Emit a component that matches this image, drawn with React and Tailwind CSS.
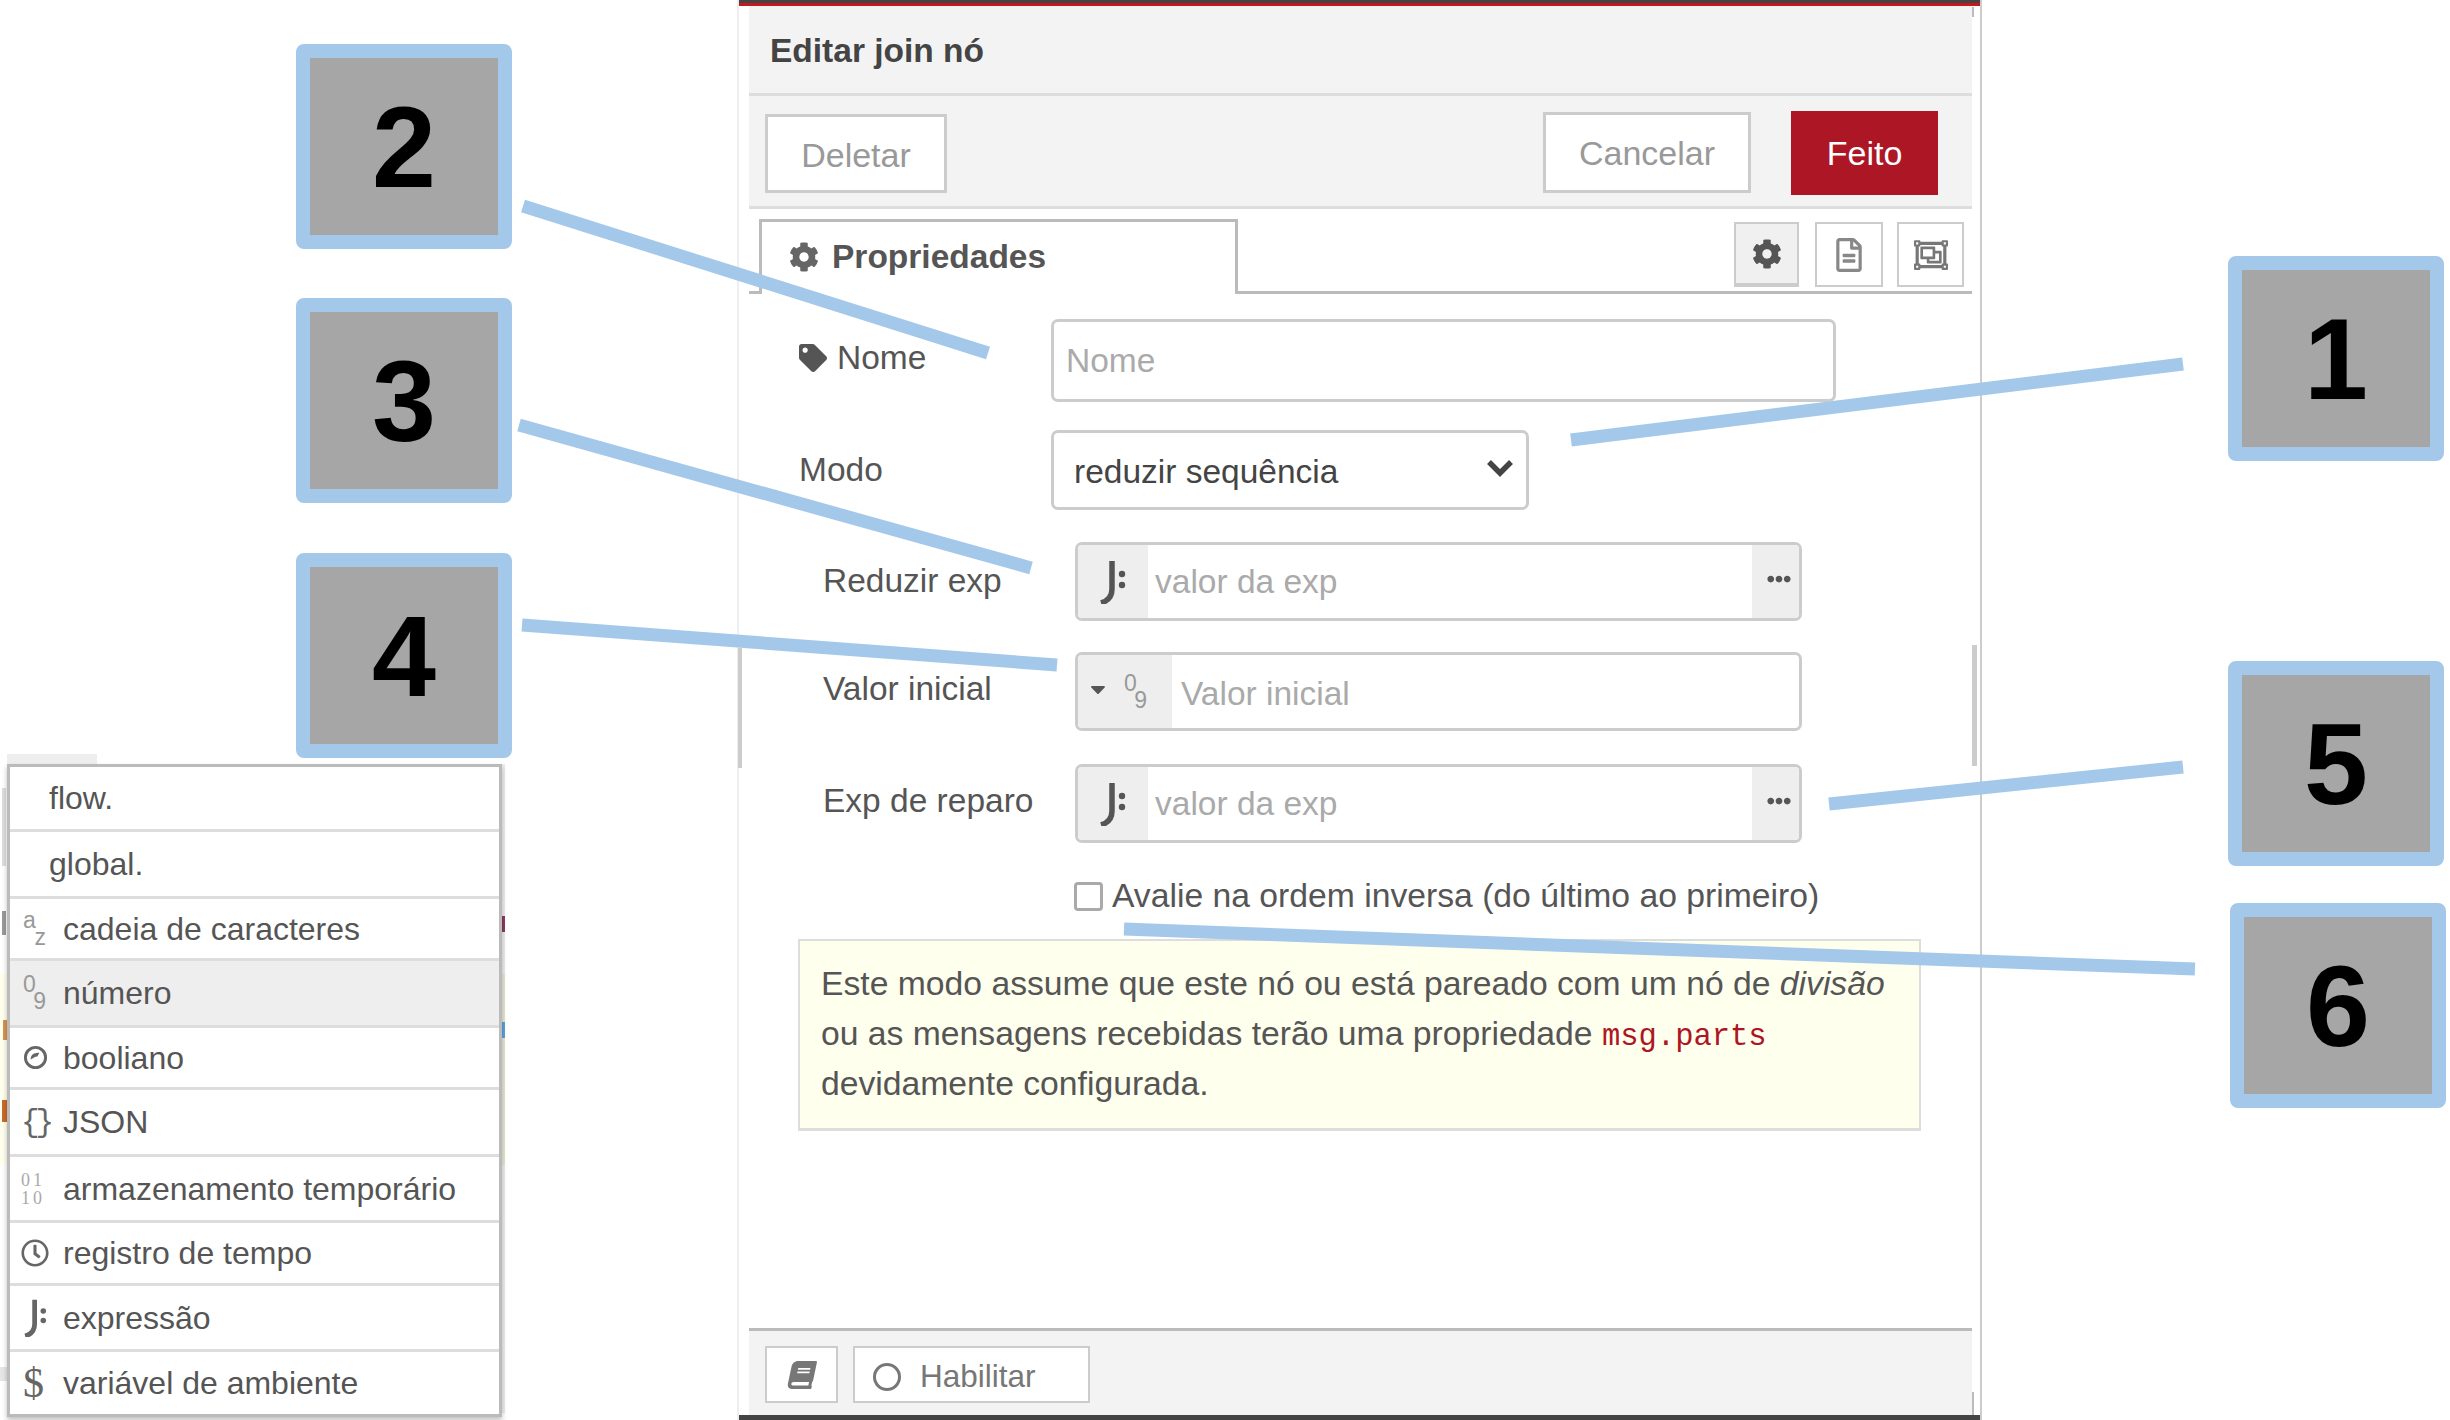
import { FaBook, FaCaretDown, FaCog, FaEllipsisH, FaRegClock, FaRegFileAlt, FaRegObjectGroup, FaTag } from 'react-icons/fa'

const badges = [
  { n: '2', cls: 'left-[296px] top-[44px]' },
  { n: '3', cls: 'left-[296px] top-[298px]' },
  { n: '4', cls: 'left-[296px] top-[553px]' },
  { n: '1', cls: 'left-[2228px] top-[256px]' },
  { n: '5', cls: 'left-[2228px] top-[661px]' },
  { n: '6', cls: 'left-[2230px] top-[903px]' },
]

const leaders = [
  [523, 206, 988, 353],
  [519, 425, 1031, 568],
  [522, 625, 1057, 665],
  [1571, 440, 2183, 364],
  [1829, 804, 2183, 767],
  [1124, 929, 2195, 969],
]

function JsonataIcon({ className }) {
  return (
    <svg viewBox="0 0 28 44" className={className} fill="none">
      <path d="M13 1V29C13 37 9 41 2 43" stroke="currentColor" strokeWidth="5.5" />
      <circle cx="23" cy="14" r="3.2" fill="currentColor" />
      <circle cx="23" cy="25" r="3.2" fill="currentColor" />
    </svg>
  )
}

function BoolIcon() {
  return (
    <svg viewBox="0 0 26 26" className="w-[25px] h-[25px] text-[#666]" fill="none">
      <circle cx="13" cy="13" r="10.5" stroke="currentColor" strokeWidth="3" />
      <path d="M8 15C8 10 11 8 17 8L15 12C12 12 11 14 8 15Z" fill="currentColor" />
    </svg>
  )
}

function StackedIcon({ top, bottom }) {
  return (
    <span className="flex flex-col w-[23px] text-[23px] leading-[17px] text-[#999]">
      <span className="self-start">{top}</span>
      <span className="self-end">{bottom}</span>
    </span>
  )
}

const menuRows = [
  { label: 'flow.', h: 'h-[62px]' },
  { label: 'global.', h: 'h-[67px]' },
  { label: 'cadeia de caracteres', h: 'h-[62px]', icon: <StackedIcon top="a" bottom="z" /> },
  { label: 'número', h: 'h-[67px]', icon: <StackedIcon top="0" bottom="9" />, active: true },
  { label: 'booliano', h: 'h-[62px]', icon: <BoolIcon /> },
  { label: 'JSON', h: 'h-[67px]', icon: <span className="-ml-[2px] text-[31px] leading-none text-[#666] font-['Liberation_Mono',monospace] tracking-[-4px]">{'{}'}</span> },
  {
    label: 'armazenamento temporário',
    h: 'h-[66px]',
    icon: (
      <span className="flex flex-col -ml-[2px] text-[18px] leading-[18px] text-[#aaa] font-['Liberation_Serif',serif] tracking-[3px]">
        <span>01</span>
        <span>10</span>
      </span>
    ),
  },
  { label: 'registro de tempo', h: 'h-[63px]', icon: <FaRegClock className="-ml-[2px] w-[28px] h-[28px] text-[#666]" /> },
  { label: 'expressão', h: 'h-[66px]', icon: <JsonataIcon className="w-[25px] h-[38px] text-[#666]" /> },
  { label: 'variável de ambiente', h: 'h-[65px]', icon: <span className="text-[42px] leading-none text-[#666] font-['Liberation_Serif',serif]">$</span> },
]

function TypeMenu() {
  return (
    <div className="absolute left-[7px] top-[764px] w-[495px] border-[3px] border-[#bbb] bg-white shadow-[0_3px_5px_rgba(0,0,0,0.25)]">
      {menuRows.map((row, index) => (
        <div
          key={row.label}
          className={`${row.h} flex items-center text-[32px] text-[#555] ${index > 0 ? 'border-t-[3px] border-[#ddd]' : ''} ${row.active ? 'bg-[#eee]' : ''}`}
        >
          {row.icon ? (
            <>
              <span className="w-[53px] pl-[13px] flex items-center justify-start shrink-0">{row.icon}</span>
              <span>{row.label}</span>
            </>
          ) : (
            <span className="pl-[39px]">{row.label}</span>
          )}
        </div>
      ))}
    </div>
  )
}

// slivers of the editor canvas that show behind the menu
function MenuBackdrop() {
  return (
    <>
      <div className="absolute left-[7px] top-[754px] w-[90px] h-[10px] bg-[#eee]" />
      <div className="absolute left-[2px] top-[788px] w-[4px] h-[78px] bg-[#ddd]" />
      <div className="absolute left-[2px] top-[911px] w-[4px] h-[24px] bg-[#999]" />
      <div className="absolute left-0 top-[974px] w-[7px] h-[191px] bg-[#ffffee]" />
      <div className="absolute left-[3px] top-[1020px] w-[4px] h-[20px] bg-[#d9924f]" />
      <div className="absolute left-[2px] top-[1100px] w-[5px] h-[22px] bg-[#c96a2c]" />
      <div className="absolute left-0 top-[1367px] w-[7px] h-[14px] bg-[#e6e6e6]" />
      <div className="absolute left-[501px] top-[764px] w-[4px] h-[649px] bg-[#ececec]" />
      <div className="absolute left-[502px] top-[916px] w-[3px] h-[16px] bg-[#8a3a5c]" />
      <div className="absolute left-[502px] top-[974px] w-[3px] h-[191px] bg-[#e6e6cf]" />
      <div className="absolute left-[502px] top-[1022px] w-[3px] h-[16px] bg-[#5aa3d8]" />
    </>
  )
}

function Row({ sub, label, icon, children, labelClass = '', className = '' }) {
  return (
    <div className={`flex items-center ${sub ? 'pl-[74px]' : 'pl-[50px]'} ${className}`}>
      <div className={`w-[252px] flex items-center gap-[10px] text-[33.5px] text-[#555] ${labelClass}`}>
        {icon}
        {label}
      </div>
      {children}
    </div>
  )
}

function ExpInput() {
  return (
    <div className="w-[727px] h-[79px] flex rounded-[7px] border-[3px] border-[#ccc] overflow-hidden bg-white">
      <div className="w-[70px] bg-[#eee] flex items-center justify-center">
        <JsonataIcon className="w-[28px] h-[44px] text-[#555]" />
      </div>
      <div className="flex-1 pl-[7px] pt-[2px] flex items-center text-[33.5px] text-[#aaa]">valor da exp</div>
      <div className="w-[47px] bg-[#eee] flex items-start pt-[22px] pl-[6px] justify-center">
        <FaEllipsisH className="w-[28px] h-[24px] text-[#555]" />
      </div>
    </div>
  )
}

export default function App() {
  return (
    <div className="relative w-[2450px] h-[1420px] overflow-hidden bg-white font-['Liberation_Sans',Arial,sans-serif]">
      {/* edit dialog */}
      <div className="absolute left-[737px] top-0 w-[1245px] h-[1420px] flex flex-col border-l-[2px] border-r-[2px] border-l-[#eee] border-r-[#ccc] bg-white">
        <div className="h-[3px] bg-[#444]" />
        <div className="h-[3px] bg-[#c8161d]" />
        <div className="flex-1 flex flex-col ml-[10px] mr-[8px]">
          <div className="h-[90px] shrink-0 pl-[21px] pt-[3px] flex items-center bg-[#f3f3f3] border-b-[3px] border-[#ddd] text-[33.5px] font-bold text-[#444]">
            Editar join nó
          </div>

          <div className="h-[113px] shrink-0 flex items-start justify-between pl-[16px] pr-[34px] bg-[#f3f3f3] border-b-[3px] border-[#ddd]">
            <button className="mt-[18px] w-[182px] h-[79px] pt-[4px] border-[3px] border-[#ccc] bg-white text-[34px] text-[#999]">Deletar</button>
            <div className="mt-[15px] flex items-start gap-[40px]">
              <button className="mt-[1px] w-[208px] h-[81px] pt-[2px] border-[3px] border-[#ccc] bg-white text-[34px] text-[#999]">Cancelar</button>
              <button className="w-[147px] h-[84px] bg-[#ad1625] text-[34px] text-white">Feito</button>
            </div>
          </div>

          {/* tabs */}
          <div className="h-[85px] shrink-0 flex items-start justify-between pl-[10px] pr-[8px] border-b-[3px] border-[#bbb]">
            <div className="mt-[10px] w-[479px] h-[75px] -mb-[3px] pl-[27px] pb-[2px] flex items-center gap-[13px] bg-white border-[3px] border-b-0 border-[#bbb] text-[33.5px] font-bold text-[#555]">
              <FaCog className="w-[30px] h-[30px] text-[#666]" />
              Propriedades
            </div>
            <div className="mt-[13px] flex">
              <div className="w-[65px] h-[65px] flex items-center justify-center bg-[#f0f0f0] border-[2px] border-b-[4px] border-[#ccc]">
                <FaCog className="w-[30px] h-[32px] text-[#555]" />
              </div>
              <div className="ml-[16px] w-[68px] h-[65px] flex items-center justify-center border-[2px] border-[#ccc]">
                <FaRegFileAlt className="w-[28px] h-[34px] text-[#888]" />
              </div>
              <div className="ml-[14px] w-[67px] h-[65px] flex items-center justify-center border-[2px] border-[#ccc]">
                <FaRegObjectGroup className="w-[38px] h-[34px] text-[#777]" />
              </div>
            </div>
          </div>

          {/* form */}
          <div className="flex-1 flex flex-col pt-[25px]">
            <Row label="Nome" icon={<FaTag className="w-[28px] h-[28px] text-[#555]" />} labelClass="-mt-[5px]">
              <div className="w-[785px] h-[83px] pl-[12px] pt-[2px] flex items-center rounded-[7px] border-[3px] border-[#ccc] text-[33.5px] text-[#aaa]">Nome</div>
            </Row>
            <Row label="Modo" className="mt-[28px]">
              <div className="w-[478px] h-[80px] pl-[20px] pr-[12px] flex items-center justify-between rounded-[7px] border-[3px] border-[#ccc] text-[33.5px] text-[#444]">
                <span className="pt-[5px]">reduzir sequência</span>
                <svg viewBox="0 0 28 20" className="w-[28px] h-[20px] -mt-[4px] text-[#444]" fill="none">
                  <path d="M3 4L14 15L25 4" stroke="currentColor" strokeWidth="5.5" />
                </svg>
              </div>
            </Row>
            <Row sub label="Reduzir exp" className="mt-[32px]" labelClass="-mt-[1px]">
              <ExpInput />
            </Row>
            <Row sub label="Valor inicial" className="mt-[31px]" labelClass="-mt-[5px]">
              <div className="w-[727px] h-[79px] flex rounded-[7px] border-[3px] border-[#ccc] overflow-hidden bg-white">
                <div className="w-[94px] bg-[#eee] flex items-center pl-[10px] gap-[16px]">
                  <FaCaretDown className="w-[20px] h-[24px] -mt-[6px] text-[#555]" />
                  <StackedIcon top="0" bottom="9" />
                </div>
                <div className="flex-1 pl-[9px] pt-[6px] flex items-center text-[33.5px] text-[#aaa]">Valor inicial</div>
              </div>
            </Row>
            <Row sub label="Exp de reparo" className="mt-[33px]" labelClass="-mt-[4px]">
              <ExpInput />
            </Row>

            <div className="mt-[38px] pl-[325px] flex items-center gap-[9px] text-[33.7px] leading-[33px] text-[#555]">
              <span className="w-[29px] h-[29px] rounded-[4px] border-[3px] border-[#aaa] bg-white shrink-0" />
              <span className="-mt-[2px]">Avalie na ordem inversa (do último ao primeiro)</span>
            </div>

            <div className="mt-[27px] ml-[49px] w-[1123px] h-[192px] pl-[21px] pt-[17px] bg-[#ffffee] border-[2px] border-b-[3px] border-[#ddd] text-[33.7px] leading-[50px] text-[#555]">
              Este modo assume que este nó ou está pareado com um nó de <i>divisão</i>
              <br />
              ou as mensagens recebidas terão uma propriedade{' '}
              <code className="font-['Liberation_Mono',monospace] text-[30.5px] leading-none text-[#ad1625]">msg.parts</code>
              <br />
              devidamente configurada.
            </div>
          </div>

          {/* footer */}
          <div className="h-[87px] shrink-0 flex items-start gap-[15px] pl-[16px] pt-[15px] bg-[#f3f3f3] border-t-[3px] border-[#bbb]">
            <div className="w-[73px] h-[57px] flex items-center justify-center bg-white border-[2px] border-[#ccc]">
              <FaBook className="w-[28px] h-[28px] -skew-x-12 text-[#777]" />
            </div>
            <div className="w-[237px] h-[57px] pl-[18px] pt-[4px] flex items-center gap-[19px] bg-white border-[2px] border-[#ccc] text-[31.5px] text-[#777]">
              <span className="w-[28px] h-[28px] rounded-full border-[3px] border-[#777]" />
              <span>Habilitar</span>
            </div>
          </div>
        </div>
        <div className="h-[5px] bg-[#444]" />

        {/* scrollbar stubs on the panel edges */}
        <div className="absolute -left-[1px] top-[648px] w-[4px] h-[120px] bg-[#ccc]" />
        <div className="absolute left-[1233px] top-[645px] w-[5px] h-[121px] bg-[#ccc]" />
        <div className="absolute left-[1233px] top-[7px] w-[2px] h-[10px] bg-[#bbb]" />
        <div className="absolute left-[1233px] top-[1392px] w-[2px] h-[23px] bg-[#bbb]" />
      </div>

      <MenuBackdrop />
      <TypeMenu />

      {/* callout leaders */}
      <svg className="absolute inset-0 w-[2450px] h-[1420px] pointer-events-none" viewBox="0 0 2450 1420">
        {leaders.map(([x1, y1, x2, y2], index) => (
          <line key={index} x1={x1} y1={y1} x2={x2} y2={y2} stroke="#a4c8ea" strokeWidth="13" />
        ))}
      </svg>

      {badges.map((b) => (
        <div
          key={b.n}
          className={`absolute ${b.cls} w-[216px] h-[205px] pt-[2px] flex items-center justify-center rounded-[8px] border-[14px] border-[#a4c8ea] bg-[#a6a6a6] text-[115px] font-bold leading-none text-black`}
        >
          {b.n}
        </div>
      ))}
    </div>
  )
}
